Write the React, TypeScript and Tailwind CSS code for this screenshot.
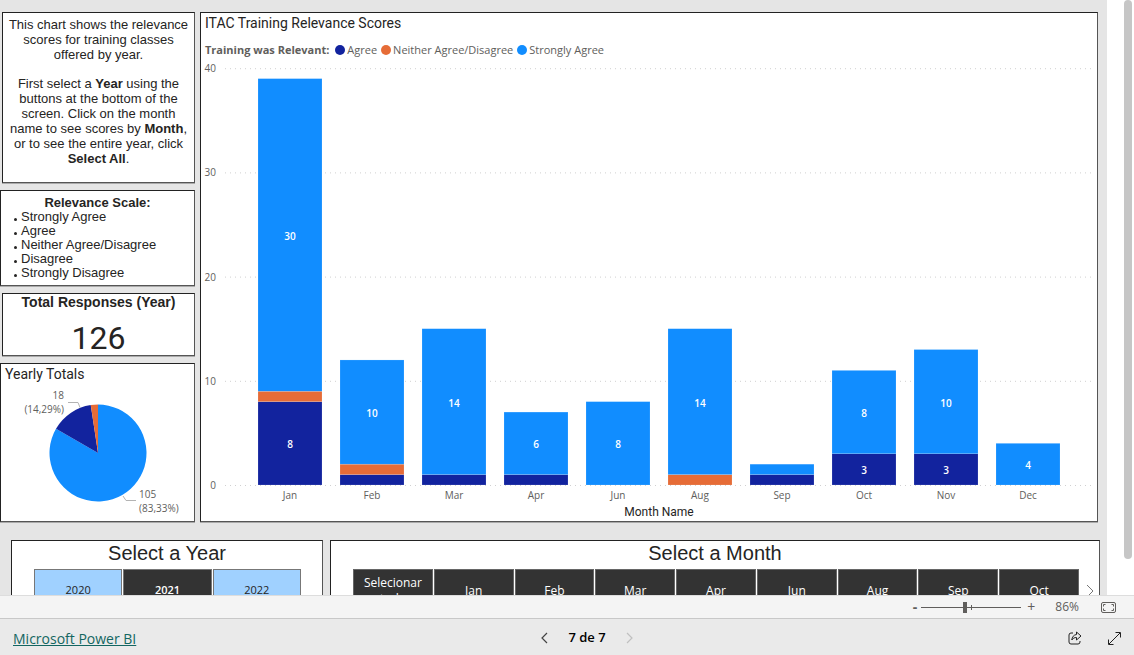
import React, { useState } from "react";

const COLORS = {
  agree: "#12239e",
  neither: "#e66c37",
  strongly: "#118dff",
};

const legend = [
  { label: "Agree", color: COLORS.agree },
  { label: "Neither Agree/Disagree", color: COLORS.neither },
  { label: "Strongly Agree", color: COLORS.strongly },
];

const scores = [
  { month: "Jan", agree: 8, neither: 1, strongly: 30 },
  { month: "Feb", agree: 1, neither: 1, strongly: 10 },
  { month: "Mar", agree: 1, neither: 0, strongly: 14 },
  { month: "Apr", agree: 1, neither: 0, strongly: 6 },
  { month: "Jun", agree: 0, neither: 0, strongly: 8 },
  { month: "Aug", agree: 0, neither: 1, strongly: 14 },
  { month: "Sep", agree: 1, neither: 0, strongly: 1 },
  { month: "Oct", agree: 3, neither: 0, strongly: 8 },
  { month: "Nov", agree: 3, neither: 0, strongly: 10 },
  { month: "Dec", agree: 0, neither: 0, strongly: 4 },
];

const scale = ["Strongly Agree", "Agree", "Neither Agree/Disagree", "Disagree", "Strongly Disagree"];
const years = ["2020", "2021", "2022"];
const months = ["Selecionar tudo", "Jan", "Feb", "Mar", "Apr", "Jun", "Aug", "Sep", "Oct"];

const card = "border border-[#222] border-r-[#555] border-b-[#555] bg-white shadow-[0_1px_0_#aaa]";
const segoe = "font-['Open_Sans','Noto_Sans',sans-serif]";
const din = "font-[Roboto,sans-serif]";

function BarChart() {
  const base = 424;
  const unit = 10.42;

  return (
    <svg viewBox="0 0 896 460" className={`block h-auto w-full ${segoe}`} role="img" aria-label="Scores by month">
      {[0, 10, 20, 30, 40].map((tick) => (
        <g key={tick}>
          <line
            x1="24"
            x2="893"
            y1={base + 0.5 - tick * unit}
            y2={base + 0.5 - tick * unit}
            stroke="#d0d0d0"
            strokeDasharray="1 4"
          />
          <text x="15" y={base + 4 - tick * unit} textAnchor="end" fontSize="10" fill="#605e5c">
            {tick}
          </text>
        </g>
      ))}
      {scores.map((s, i) => {
        const x = 57 + i * 82;
        const parts = [
          { value: s.agree, from: 0, color: COLORS.agree },
          { value: s.neither, from: s.agree, color: COLORS.neither },
          { value: s.strongly, from: s.agree + s.neither, color: COLORS.strongly },
        ];
        return (
          <g key={s.month}>
            {parts
              .filter((p) => p.value > 0)
              .map((p) => (
                <g key={p.color}>
                  <rect
                    x={x}
                    y={base - (p.from + p.value) * unit}
                    width="64"
                    height={p.value * unit}
                    fill={p.color}
                    stroke="#ffffff"
                    strokeOpacity="0.3"
                    strokeWidth="0.5"
                  />
                  {p.value > 1 && (
                    <text
                      x={x + 32}
                      y={base - (p.from + p.value / 2) * unit + 5}
                      textAnchor="middle"
                      fontSize="10"
                      fontWeight="600"
                      fill="#fff"
                    >
                      {p.value}
                    </text>
                  )}
                </g>
              ))}
            <text x={x + 32} y={base + 14} textAnchor="middle" fontSize="10" fill="#605e5c">
              {s.month}
            </text>
          </g>
        );
      })}
      <text x="458" y="455" textAnchor="middle" fontSize="12" fill="#252423" className={din}>
        Month Name
      </text>
    </svg>
  );
}

function PieChart() {
  const cx = 97;
  const cy = 70;
  const r = 48.5;
  const point = (deg: number) => {
    const a = ((deg - 90) * Math.PI) / 180;
    return `${cx + r * Math.cos(a)} ${cy + r * Math.sin(a)}`;
  };
  const slices = [
    { from: 0, to: 300, color: COLORS.strongly },
    { from: 300, to: 351.4, color: COLORS.agree },
    { from: 351.4, to: 360, color: COLORS.neither },
  ];

  return (
    <svg viewBox="0 1 193 137" className={`block h-auto w-full ${segoe}`} role="img" aria-label="Yearly totals">
      {slices.map((s) => (
        <path
          key={s.color}
          d={`M${cx} ${cy} L${point(s.from)} A${r} ${r} 0 ${s.to - s.from > 180 ? 1 : 0} 1 ${point(s.to)} Z`}
          fill={s.color}
        />
      ))}
      <g fill="none" stroke="#b3b3b3">
        <path d="M67 19.5h10l2 5" />
        <path d="M122 113l3 4.500h10" />
      </g>
      <g fontSize="10" fill="#605e5c">
        <text x="63" y="16" textAnchor="end">18</text>
        <text x="63" y="30" textAnchor="end">(14,29%)</text>
        <text x="138" y="115">105</text>
        <text x="138" y="129">(83,33%)</text>
      </g>
    </svg>
  );
}

export default function App() {
  const [year, setYear] = useState("2021");
  const [month, setMonth] = useState("");
  const [zoom, setZoom] = useState(86);

  return (
    <div className="flex h-screen flex-col overflow-hidden bg-white font-['Liberation_Sans',Arial,sans-serif] text-[#252423]">
      <div className="flex min-h-0 flex-1">
        <main className="min-w-0 flex-1 overflow-hidden bg-[#e5e5e5] pt-3">
          <div className="flex gap-[5px] pr-[9px]">
            <aside className="flex w-[195px] shrink-0 flex-col gap-[7px]">
              <section className={`ml-0.5 h-[171px] px-1 pt-1 text-center text-[13px] leading-[15px] ${card}`}>
                <p>This chart shows the relevance scores for training classes offered by year.</p>
                <p className="mt-[14px]">
                  First select a <b>Year</b> using the buttons at the bottom of the screen. Click on the month name to
                  see scores by <b>Month</b>, or to see the entire year, click <b>Select All</b>.
                </p>
              </section>

              <section className={`h-24 pt-[5px] text-[13px] leading-[14px] ${card}`}>
                <h2 className="text-center font-bold">Relevance Scale:</h2>
                <ul className="pl-3">
                  {scale.map((item) => (
                    <li key={item} className="flex items-center gap-1">
                      <span className="mt-1 ml-px size-[3px] rounded-full bg-[#252423]" />
                      {item}
                    </li>
                  ))}
                </ul>
              </section>

              <section className={`ml-0.5 h-[63px] text-center ${card}`}>
                <h2 className="text-[14px] leading-4 font-bold">Total Responses (Year)</h2>
                <p className={`mt-2 text-[32px] leading-10 ${din}`}>126</p>
              </section>

              <section className={`h-[159px] ${card}`}>
                <h2 className={`px-1 text-[14px] leading-5 ${din}`}>Yearly Totals</h2>
                <PieChart />
              </section>
            </aside>

            <section className={`min-w-0 flex-1 ${card}`}>
              <h1 className={`px-1 text-[14px] leading-5 ${din}`}>ITAC Training Relevance Scores</h1>
              <div className={`mt-1.5 flex h-[22px] items-center px-1 text-[11px] text-[#605e5c] ${segoe}`}>
                <span className="mr-1.5 font-bold">Training was Relevant:</span>
                {legend.map((l) => (
                  <span key={l.label} className="mr-1 flex items-center gap-0.5">
                    <span className="size-2.5 rounded-full" style={{ backgroundColor: l.color }} />
                    {l.label}
                  </span>
                ))}
              </div>
              <BarChart />
            </section>
          </div>

          <div className="mt-[18px] flex gap-[7px] pr-[7px] pl-[11px]">
            <section className={`h-24 w-[312px] shrink-0 ${card}`}>
              <h2 className="text-center text-[20px] leading-6">Select a Year</h2>
              <div className={`mt-1 flex gap-px pr-[21px] pl-[22px] text-[11px] ${segoe}`}>
                {years.map((y) => (
                  <button
                    key={y}
                    type="button"
                    onClick={() => setYear(y)}
                    className={`h-[43px] flex-1 border border-[#777] ${
                      y === year ? "bg-[#333] font-semibold text-white" : "bg-[#a0d1ff]"
                    }`}
                  >
                    {y}
                  </button>
                ))}
              </div>
            </section>

            <section className={`h-24 min-w-0 flex-1 ${card}`}>
              <h2 className="text-center text-[20px] leading-6">Select a Month</h2>
              <div className={`mt-1 flex items-center pr-[3px] pl-[22px] text-[12px] text-white ${segoe}`}>
                <div className="flex flex-1 gap-px">
                  {months.map((m) => (
                    <button
                      key={m}
                      type="button"
                      onClick={() => setMonth(m)}
                      className={`h-[43px] flex-1 basis-0 border border-[#666] leading-4 ${
                        m === month ? "bg-[#555]" : "bg-[#333]"
                      }`}
                    >
                      {m}
                    </button>
                  ))}
                </div>
                <button type="button" aria-label="Next months" className="flex w-[17px] justify-end">
                  <svg width="10" height="14" viewBox="0 0 10 14" fill="none" stroke="#777">
                    <path d="M1 1l6 6-6 6" />
                  </svg>
                </button>
              </div>
            </section>
          </div>
        </main>

        {/* Vertical scroll track */}
        <div className="flex w-[27px] justify-end bg-white pr-0.5">
          <div className="h-[94%] w-2 rounded-full bg-[#c6c6c6]" />
        </div>
      </div>

      <div
        className={`flex h-[23px] shrink-0 items-center justify-end border-t border-[#ddd] bg-[#f4f4f4] pr-[18px] text-[#605e5c] ${segoe}`}
      >
        <button type="button" aria-label="Zoom out" className="mr-1 text-[14px] leading-5 font-bold" onClick={() => setZoom(zoom - 10)}>
          -
        </button>
        <div className="relative flex h-3 w-[100px] items-center">
          <input
            type="range"
            aria-label="Zoom"
            min={0}
            max={200}
            value={zoom}
            onChange={(e) => setZoom(Number(e.target.value))}
            className="h-px w-full appearance-none bg-[#605e5c] [&::-webkit-slider-thumb]:h-[11px] [&::-webkit-slider-thumb]:w-1 [&::-webkit-slider-thumb]:appearance-none [&::-webkit-slider-thumb]:bg-[#605e5c]"
          />
          <span className="pointer-events-none absolute left-1/2 h-[5px] w-px bg-[#605e5c]" />
        </div>
        <button type="button" aria-label="Zoom in" className="ml-1.5 text-[14px] leading-5" onClick={() => setZoom(zoom + 10)}>
          +
        </button>
        <span className="ml-5 text-[12px]">{zoom}%</span>
        <button type="button" aria-label="Fit to page" className="ml-[22px]">
          <svg width="15" height="11" viewBox="0 0 15 11" fill="none" stroke="#605e5c">
            <rect x="0.5" y="0.5" width="14" height="10" rx="1.500" />
            <path d="M2.500 4.500v-2h2M2.500 6.500v2h2M10.500 2.500h2v2M10.500 8.500h2v-2" />
          </svg>
        </button>
      </div>

      <footer
        className={`grid h-[37px] shrink-0 grid-cols-3 items-center border-t border-[#c8c8c8] bg-[#eaeaea] pt-0.5 pr-[13px] pl-[13px] ${segoe}`}
      >
        <a href="#" className="text-[14px] text-[#136661] underline">
          Microsoft Power BI
        </a>
        <div className="flex items-center justify-center gap-5 pl-10 text-[13px] font-semibold text-black">
          <button type="button" aria-label="Previous page">
            <svg width="7" height="12" viewBox="0 0 7 12" fill="none" stroke="#444" strokeWidth="1.200">
              <path d="M6 1L1 6l5 5" />
            </svg>
          </button>
          <span>7 de 7</span>
          <button type="button" aria-label="Next page" disabled>
            <svg width="7" height="12" viewBox="0 0 7 12" fill="none" stroke="#c0c0c0" strokeWidth="1.200">
              <path d="M1 1l5 5-5 5" />
            </svg>
          </button>
        </div>
        <div className="flex items-center justify-end gap-[26px]">
          <button type="button" aria-label="Share">
            <svg width="14" height="14" viewBox="0 0 14 14" fill="none" stroke="#222" strokeLinejoin="round">
              <path d="M5 2H3a2 2 0 0 0-2 2v7a2 2 0 0 0 2 2h7a2 2 0 0 0 2-2v-1" />
              <path d="M8.500 1l4.500 4-4.500 4V6.500C6.500 6.500 5 7.200 3.800 9c.2-3 2-5.200 4.700-5.500z" />
            </svg>
          </button>
          <button type="button" aria-label="Full screen">
            <svg width="13" height="13" viewBox="0 0 13 13" fill="none" stroke="#222">
              <path d="M1 12L12 1M7.500 0.500h5v5M0.500 7.500v5h5" />
            </svg>
          </button>
        </div>
      </footer>
    </div>
  );
}
